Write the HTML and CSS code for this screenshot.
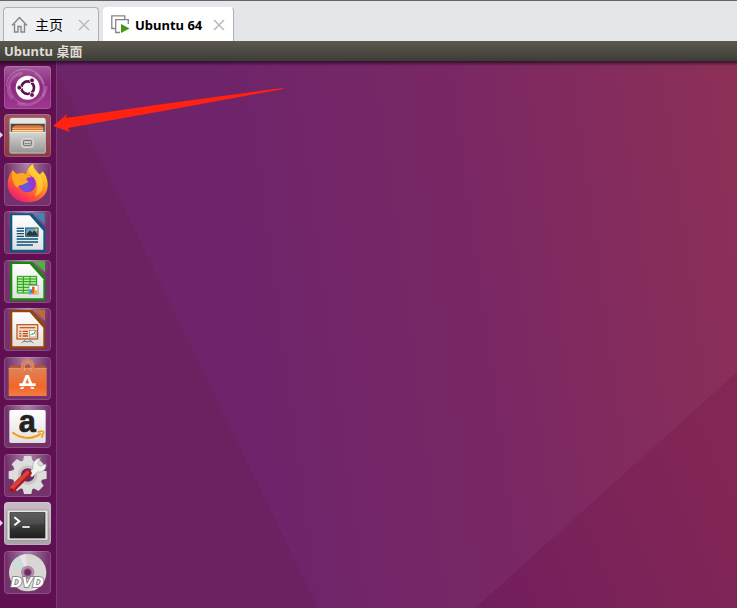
FILE: index.html
```html
<!DOCTYPE html>
<html lang="zh-CN">
<head>
    <meta charset="UTF-8">
    <meta name="viewport" content="width=device-width, initial-scale=1.0">
    <title>Ubuntu 64</title>
    <link rel="stylesheet" href="styles.css">
</head>
<body>

<div class="tabs">
    <div class="tab">
        <svg class="tab-icon home-icon" viewBox="0 0 17 17"><path d="M1 9.5 8.500 1.500 16 9.500M3.500 8v8h3.500v-5.500h3V16h3.500V8" fill="none" stroke="#858585" stroke-width="1.400"/></svg>
        <button class="tab-name home-name">主页</button>
        <button class="tab-close" aria-label="关闭"><svg viewBox="0 0 12 12"><path d="M1 1 11 11M11 1 1 11" stroke="#bdbdbd" stroke-width="1.700"/></svg></button>
    </div>
    <div class="tab active">
        <svg class="tab-icon" viewBox="0 0 19 19"><path d="M4 13.500H.800V.800h13V4" fill="none" stroke="#858585" stroke-width="1.300"/><path d="M9 17.500H4.700V4.700h12.600V9" fill="none" stroke="#858585" stroke-width="1.300"/><path d="M10 9 18.500 13.500 10 18z" fill="#3f9a12"/></svg>
        <button class="tab-name">Ubuntu 64</button>
        <button class="tab-close" aria-label="关闭"><svg viewBox="0 0 12 12"><path d="M1 1 11 11M11 1 1 11" stroke="#bdbdbd" stroke-width="1.700"/></svg></button>
    </div>
</div>

<header class="panel">Ubuntu 桌面</header>

<div class="desktop">
    <nav class="launcher">
        <button class="tile dash" aria-label="Dash">
            <svg viewBox="0 0 141 129">
                <g fill="none" stroke="#fff">
                    <path d="M8 62C5 35 30 10 62 10c30 0 52 18 56 44" stroke-opacity=".2" stroke-width="4"/>
                    <path d="M25 98C0 70 18 26 55 22" stroke-opacity=".18" stroke-width="9"/>
                    <path d="M40 112c40 14 82-8 88-52" stroke-opacity=".16" stroke-width="9"/>
                    <path d="M92 22c24 12 36 42 24 70" stroke-opacity=".16" stroke-width="8"/>
                    <path d="M18 58c2 32 18 52 46 55" stroke-opacity=".14" stroke-width="5"/>
                </g>
                <circle cx="71" cy="65" r="36" fill="#fff"/>
                <circle cx="71" cy="65" r="19" fill="none" stroke="#5b124f" stroke-width="8"/>
                <path d="M59 65H44M77 55l8-14M77 75l8 14" stroke="#fff" stroke-width="3"/>
                <g fill="#5b124f" stroke="#fff" stroke-width="2"><circle cx="46" cy="65" r="7"/><circle cx="84" cy="43" r="7"/><circle cx="84" cy="87" r="7"/></g>
            </svg>
        </button>
        <button class="tile files running" aria-label="文件">
            <svg viewBox="0 0 141 129">
                <defs><linearGradient id="steel" x2="0" y2="1"><stop stop-color="#d5d5d3"/><stop offset="1" stop-color="#979795"/></linearGradient></defs>
                <path d="M16 20q0-9 8-9h94q8 0 8 9v92q0 7-6 7H22q-6 0-6-7z" fill="#b0afac"/>
                <path d="M18 20q0-8 7-8h92q7 0 7 8v8H18z" fill="#e8e6e3"/>
                <path d="M21 30h101v25H21z" fill="#4a4a45"/>
                <path d="M26 38 35 34h74l9 4v18H26z" fill="#d9743a"/>
                <path d="M24 43h94" stroke="#f5b270" stroke-width="3"/>
                <path d="M24 50h94" stroke="#ffe0a2" stroke-width="4"/>
                <path d="M17 55h108l-3 60H20z" fill="url(#steel)"/>
                <path d="M17 55h108" stroke="#ededeb" stroke-width="3"/>
                <rect x="53" y="74" width="35" height="26" rx="5" fill="#bdbdbb" stroke="#dedddb" stroke-width="3"/>
                <rect x="59" y="80" width="23" height="14" rx="2" fill="#ddd" stroke="#666664" stroke-width="3"/>
                <path d="M62 88h17" stroke="#777" stroke-width="3"/>
            </svg>
        </button>
        <button class="tile" aria-label="Firefox">
            <svg viewBox="0 0 141 129">
                <defs>
                    <linearGradient id="fire" x1="1" y1="0" x2=".3" y2="1"><stop stop-color="#fff24f"/><stop offset=".35" stop-color="#ffb61e"/><stop offset=".68" stop-color="#ff622c"/><stop offset="1" stop-color="#ee1b76"/></linearGradient>
                    <radialGradient id="globe" cx=".4" cy=".65"><stop stop-color="#5661e8"/><stop offset="1" stop-color="#9b32cf"/></radialGradient>
                </defs>
                <path d="M26 21c5 7 9 10 14 12 8-4 17-4 26 1C70 18 78 8 87 3c1 17 9 21 18 31 7-1 9-6 10-10 13 13 17 31 16 46-2 31-28 48-60 48-36 0-60-24-60-54 0-17 5-30 15-43z" fill="url(#fire)"/>
                <path d="M87 3c1 20 30 29 30 62 0 20-13 31-25 34 13-21 10-49-8-55-5-14-14-21-7-31 3-5 6-8 10-10z" fill="#ffd43c" opacity=".7"/>
                <circle cx="70" cy="62" r="26" fill="url(#globe)"/>
                <path d="M26 21c5 7 9 10 14 12 9-4 19-3 25 1 8 1 14 5 18 9-11-2-18 2-15 9l6 3c-5 7-12 6-19 11-8 1-13 3-15 8-11-8-20-29-14-53z" fill="#ffa51f"/>
            </svg>
        </button>
        <button class="tile" aria-label="LibreOffice Writer">
            <svg viewBox="0 0 141 129">
                <defs><linearGradient id="paper" x2="0" y2="1"><stop stop-color="#fff"/><stop offset="1" stop-color="#e0e0df"/></linearGradient></defs>
                <path d="M23 7h62l39 45v71H18V12q0-5 5-5z" fill="#0c5786"/><path d="M91 6h31v34z" fill="#3e88b4"/>
                <path d="M25 13h52l41 46v57H25z" fill="url(#paper)"/>
                <path d="M38 52h22M38 60h22M38 68h22M38 76h22M38 84h64M38 93h64M38 102h49" stroke="#0d527d" stroke-width="4"/>
                <rect x="65" y="51" width="37" height="25" fill="#63abd5" stroke="#164c6d" stroke-width="3"/><path d="M68 74v-6l10-10 7 7 6-7 9 11v5z" fill="#333"/><circle cx="97" cy="56" r="4" fill="#f5b92d"/>
            </svg>
        </button>
        <button class="tile" aria-label="LibreOffice Calc">
            <svg viewBox="0 0 141 129">
                <path d="M23 5h62l39 45v72H18V10q0-5 5-5z" fill="#18860f"/><path d="M91 4h32v33z" fill="#4fb33e"/>
                <path d="M25 12h52l41 46v57H25z" fill="url(#paper)"/>
                <path d="M39 48h60v52H39z" fill="#b5ef9f"/><path d="M40 49h58v50H40zM40 57h58M40 65h58M40 73h58M40 82h58M40 91h58M58 49v50M78 49v50" fill="none" stroke="#249b1b" stroke-width="3"/>
                <rect x="75" y="76" width="27" height="26" fill="#fff" stroke="#8a8a85" stroke-width="2"/><path d="M76 88h8v13h-8z" fill="#2c97d6"/><path d="M84 80h8v21h-8z" fill="#e75c20"/><path d="M92 91h8v10h-8z" fill="#ebba20"/>
            </svg>
        </button>
        <button class="tile" aria-label="LibreOffice Impress">
            <svg viewBox="0 0 141 129">
                <path d="M23 6h62l39 45v71H18V11q0-5 5-5z" fill="#94430d"/><path d="M91 5h32v34z" fill="#b96e39"/>
                <path d="M25 13h52l41 46v56H25z" fill="url(#paper)"/>
                <rect x="39" y="50" width="62" height="43" fill="#f7ddc9" stroke="#bf602c" stroke-width="4"/>
                <path d="M47 59h47" stroke="#bf602c" stroke-width="4"/>
                <path d="M46 70h6M46 77h6M46 84h6M56 70h16M56 77h16M56 84h16" stroke="#bb4d19" stroke-width="4"/>
                <rect x="76" y="67" width="20" height="20" fill="#fff" stroke="#888" stroke-width="2"/><path d="m79 82 5-5 4 2 6-9" fill="none" stroke="#269833" stroke-width="3"/>
                <path d="m65 95-12 10M76 95l12 10M61 101h19" fill="none" stroke="#777" stroke-width="3"/>
            </svg>
        </button>
        <button class="tile" aria-label="Ubuntu 软件">
            <svg viewBox="0 0 141 129">
                <defs><linearGradient id="bag" x2="0" y2="1"><stop stop-color="#df8356"/><stop offset=".65" stop-color="#ef672a"/><stop offset="1" stop-color="#f47c43"/></linearGradient></defs>
                <path d="m14 35 6-10h102l6 10z" fill="#af5434"/><path d="M14 34h114v83H14z" fill="url(#bag)"/>
                <path d="M14 34h114" stroke="#f2ad82" stroke-width="2"/>
                <path d="M55 44V25q0-14 16-14t16 14v19" fill="none" stroke="#e27f55" stroke-width="8"/><path d="M61 42V27q0-11 10-11t10 11v15" fill="none" stroke="#ffb391" stroke-width="2"/>
                <text x="70" y="97" text-anchor="middle" font-family="Lato, sans-serif" font-weight="900" font-size="58" fill="#fff">A</text>
                <path d="M46 83h49" stroke="#fff" stroke-width="8"/><path d="M48 89h45" stroke="#f06a30" stroke-width="3"/>
            </svg>
        </button>
        <button class="tile" aria-label="Amazon">
            <svg viewBox="0 0 141 129">
                <rect x="16" y="15" width="109" height="99" rx="5" fill="url(#paper)"/>
                <text x="70" y="82" text-anchor="middle" font-family="Liberation Sans, sans-serif" font-weight="700" font-size="92" fill="#222" stroke="#222" stroke-width="2">a</text>
                <path d="M25 82c26 21 60 22 86 4" fill="none" stroke="#f79a15" stroke-width="6"/><path d="M101 82c10-5 19-4 18 0l-6 16" fill="none" stroke="#f79a15" stroke-width="5"/>
            </svg>
        </button>
        <button class="tile" aria-label="系统设置">
            <svg viewBox="0 0 141 129">
                <g fill="#dddddc"><circle cx="71" cy="63" r="45"/><path id="tooth" d="M57 22 60 6h22l4 16z"/><use href="#tooth" transform="rotate(45 71 63)"/><use href="#tooth" transform="rotate(90 71 63)"/><use href="#tooth" transform="rotate(135 71 63)"/><use href="#tooth" transform="rotate(180 71 63)"/><use href="#tooth" transform="rotate(225 71 63)"/><use href="#tooth" transform="rotate(270 71 63)"/><use href="#tooth" transform="rotate(315 71 63)"/></g>
                <circle cx="71" cy="63" r="25" fill="#702766" stroke="#c6c6c6" stroke-width="9"/>
                <path d="m70 58 17-14c-4-16 8-31 22-31l-8 16 7 8 17-7c5 12-9 27-24 24L84 69z" fill="#f1f1f0" stroke="#a8a8a5" stroke-width="2"/>
                <path d="m25 105 48-48" stroke="#a61d1b" stroke-width="20" stroke-linecap="round"/><path d="m24 102 46-46" stroke="#d9423a" stroke-width="12" stroke-linecap="round"/><circle cx="23" cy="107" r="4" fill="#811814"/>
            </svg>
        </button>
        <button class="tile terminal running" aria-label="终端">
            <svg viewBox="0 0 141 129">
                <defs><linearGradient id="screen" x2="0" y2="1"><stop stop-color="#555"/><stop offset="1" stop-color="#202020"/></linearGradient></defs>
                <rect x="9" y="24" width="123" height="91" rx="3" fill="#e5e4e2" stroke="#888" stroke-width="2"/>
                <rect x="18" y="32" width="105" height="76" fill="url(#screen)" stroke="#222" stroke-width="2"/>
                <path d="M19 33h103v34Q70 64 19 81z" fill="#777" opacity=".25"/>
                <path d="m31 46 15 12-15 12" fill="none" stroke="#fff" stroke-width="6"/><path d="M55 75h22" stroke="#fff" stroke-width="5"/>
            </svg>
        </button>
        <button class="tile" aria-label="DVD">
            <svg viewBox="0 0 141 129">
                <circle cx="71" cy="65" r="56" fill="#d7d7d6"/>
                <path d="M71 65 21 39A56 56 0 0 1 46 15z" fill="#c9ded9"/><path d="M71 65 46 15l18-6z" fill="#eee2e6"/><path d="m71 65 45 32a56 56 0 0 1-28 22z" fill="#eee"/>
                <circle cx="71" cy="64" r="20" fill="#b48bab"/><circle cx="71" cy="64" r="11" fill="#6b2c62" stroke="#8e5c85" stroke-width="3"/>
                <text x="70" y="108" text-anchor="middle" font-family="DejaVu Sans, sans-serif" font-weight="700" font-style="italic" font-size="41" fill="#fff" stroke="#777" stroke-width="5" paint-order="stroke">DVD</text>
            </svg>
        </button>
    </nav>
    <svg class="wallpaper" viewBox="57 61 680 547" preserveAspectRatio="none">
        <defs>
            <linearGradient id="sky" gradientUnits="userSpaceOnUse" x1="250" y1="360" x2="765" y2="290"><stop stop-color="#6e246b"/><stop offset=".5" stop-color="#7b2863"/><stop offset="1" stop-color="#8d3057"/></linearGradient>
            <linearGradient id="corner" gradientUnits="userSpaceOnUse" x1="500" y1="600" x2="737" y2="500"><stop stop-color="#731f5d"/><stop offset="1" stop-color="#832655"/></linearGradient>
        </defs>
        <path d="M57 61h680v547H57z" fill="url(#sky)"/>
        <path d="M57 70 318 608H57z" fill="#6b2261"/>
        <path d="M737 372v236H475z" fill="url(#corner)"/>
    </svg>
    <svg class="arrow" viewBox="0 0 232 46"><path d="M0 39 14 27 13 31Q120 15 230 1L230 2Q122 22 15 41L17 45z" fill="#ff2112"/></svg>
</div>

</body>
</html>
```
FILE: styles.css
```css
* {
    box-sizing: border-box;
}
body {
    display: flex;
    flex-direction: column;
    min-height: 100vh;
    margin: 0;
    font-family: "Noto Sans", "Noto Sans CJK SC", sans-serif;
}
button {
    padding: 0;
    border: none;
    background: none;
    color: inherit;
    font: inherit;
    cursor: pointer;
}
svg {
    display: block;
    overflow: visible;
}
/* 顶部标签栏 */
.tabs {
    display: flex;
    align-items: flex-end;
    gap: 4px;
    height: 41px;
    padding: 0 3px;
    border-top: 1px solid #66666a;
    background-color: #e5e6e9;
}
.tab {
    display: flex;
    align-items: center;
    min-width: 96px;
    height: 34px;
    padding: 0 8px 0 7px;
    border: 1px solid #b0b0b3;
    border-bottom: none;
    border-radius: 4px 4px 0 0;
    background-color: #eff0f2;
    font-size: 13px;
    font-weight: 700;
}
.tab.active {
    min-width: 131px;
    border-color: #fff #b0b0b3 #fff #fff;
    background-color: #fff;
}
.tab-icon {
    width: 19px;
    height: 19px;
    margin-right: 5px;
}
.home-icon {
    width: 17px;
    height: 17px;
    margin-right: 7px;
}
.home-name {
    font-family: "Noto Sans CJK SC", sans-serif;
    font-size: 14px;
    font-weight: 400;
    line-height: 20px;
    padding-bottom: 2px;
}
.tab-close {
    width: 12px;
    margin-left: auto;
}
/* Ubuntu 顶部面板 */
.panel {
    height: 20px;
    padding: 0 4px;
    background: linear-gradient(#5c594f, #3d3c37);
    color: #dfdbd2;
    font-size: 13px;
    font-weight: 700;
    line-height: 20px;
}
.desktop {
    position: relative;
    display: flex;
    flex: 1;
}
.desktop::before {
    content: "";
    position: absolute;
    top: 0;
    left: 0;
    width: 100%;
    height: 5px;
    background: linear-gradient(rgba(20, 5, 20, 0.7), rgba(20, 5, 20, 0));
}
/* 启动器 */
.launcher {
    width: 57px;
    padding: 5px 4px;
    border-right: 1px solid #7b3976;
    background-color: #601052;
}
.tile {
    position: relative;
    display: block;
    width: 47px;
    height: 43px;
    margin-bottom: 5px;
    border-radius: 4px;
    background: radial-gradient(ellipse at 50% 0, rgba(255, 255, 255, 0.45), rgba(255, 255, 255, 0.08) 65%), #682060;
    box-shadow: inset 0 0 0 1px rgba(255, 255, 255, 0.15);
}
.tile:nth-child(even) {
    margin-bottom: 6px;
}
.dash {
    background: linear-gradient(#a35b9a, #8d2880 45%, #9d3790);
}
.files {
    background: linear-gradient(#a05363, #8c3943);
}
.terminal {
    background: linear-gradient(#c8bbc6, #aaa1aa);
}
/* 运行中的应用左侧的小箭头 */
.running::before {
    content: "";
    position: absolute;
    top: 18px;
    left: -4px;
    border: 3px solid transparent;
    border-left-color: #e4d9e2;
    border-right: none;
}
.wallpaper {
    flex: 1;
    min-width: 0;
    height: calc(100vh - 61px);
}
.arrow {
    position: absolute;
    top: 26px;
    left: 53px;
    width: 232px;
    height: 46px;
}
```
